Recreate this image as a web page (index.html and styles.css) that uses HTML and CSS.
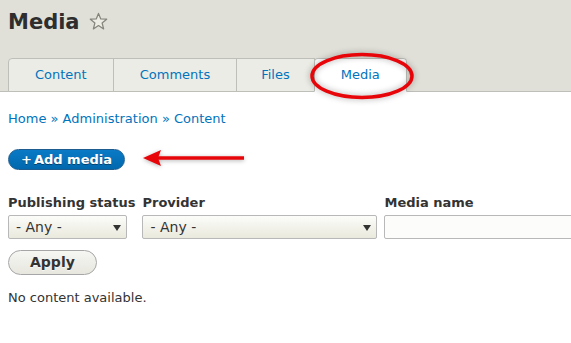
FILE: index.html
```html
<!DOCTYPE html>
<html lang="en">
<head>
  <meta charset="UTF-8" />
  <title>Media</title>
  <link rel="stylesheet" href="styles.css">
</head>
<body>
  <div class="page-header">
    <h1 class="page-title">Media
      <svg class="star" width="19" height="19" viewBox="0 0 20 20">
        <polygon points="10,1.5 12.4,7.3 18.6,7.6 13.8,11.6 15.4,17.8 10,14.3 4.6,17.8 6.2,11.6 1.4,7.6 7.6,7.3" fill="#ecebe4" stroke="#85857c" stroke-width="1.3" stroke-linejoin="round" />
      </svg>
    </h1>
    <ul class="tabs">
      <li><a href="#">Content</a></li>
      <li><a href="#">Comments</a></li>
      <li class="tab-files"><a href="#">Files</a></li>
      <li class="is-active">
        <a href="#">Media</a>
        <!-- circled in the screenshot -->
        <svg class="mark-circle" width="110" height="54" viewBox="0 0 110 54">
          <ellipse cx="55" cy="27" rx="50" ry="21.5" fill="none" stroke="#e8050a" stroke-width="3.5" />
        </svg>
      </li>
    </ul>
  </div>

  <div class="content">
    <div class="breadcrumb">
      <a href="#">Home</a> » <a href="#">Administration</a> » <a href="#">Content</a>
    </div>

    <div class="action-links">
      <a href="#" class="button-primary">+<span class="plus-gap"></span>Add media</a>
      <svg class="mark-arrow" width="106" height="22" viewBox="0 0 106 22">
        <line x1="14" y1="11" x2="103" y2="11" stroke="#e8050a" stroke-width="3.5" />
        <polygon points="2,11 20,3 17,11 20,19" fill="#e8050a" />
      </svg>
    </div>

    <form class="filters">
      <div class="form-item">
        <label>Publishing status</label>
        <span class="select-wrap select-status">
          <select><option>- Any -</option></select>
        </span>
      </div>
      <div class="form-item">
        <label>Provider</label>
        <span class="select-wrap select-provider">
          <select><option>- Any -</option></select>
        </span>
      </div>
      <div class="form-item">
        <label>Media name</label>
        <input type="text" class="text-input" />
      </div>
    </form>

    <button class="button">Apply</button>

    <p class="empty">No content available.</p>
  </div>
</body>
</html>
```

FILE: styles.css
```css
body {
  margin: 0;
  font-family: "DejaVu Sans", sans-serif;
  font-size: 13px;
  color: #333;
  background: #fff;
  overflow: hidden;
}

a {
  color: #0074bd;
  text-decoration: none;
}

.page-header {
  background: #e0e0d8;
  padding: 0 8px;
  border-bottom: 1px solid #bfbfba;
}

.page-title {
  margin: 0;
  padding-top: 8px;
  height: 58px;
  line-height: 28px;
  font-size: 21px;
  font-weight: bold;
  color: #2e2e2e;
  display: flex;
  align-items: flex-start;
  box-sizing: border-box;
}

.star {
  margin: 4px 0 0 9px;
}

.tabs {
  list-style: none;
  margin: 0 0 -1px;
  padding: 0;
  display: flex;
}

.tabs li {
  position: relative;
  background: #ecece6;
  border: 1px solid #bfbfba;
  margin-left: -1px;
}

.tabs li:first-child {
  margin-left: 0;
  border-top-left-radius: 4px;
}

.tabs a {
  display: block;
  padding: 8px 26px;
  line-height: 16px;
}

.tabs .tab-files a {
  padding: 8px 24px;
}

.tabs li.is-active {
  background: #fff;
  border-bottom-color: #fff;
  border-radius: 4px 4px 0 0;
}

.mark-circle {
  position: absolute;
  left: -8px;
  top: -10px;
  filter: drop-shadow(0 0 3px rgba(0, 0, 0, 0.35));
}

.content {
  padding: 18px 8px 0;
  overflow: hidden;
}

.breadcrumb {
  line-height: 18px;
  color: #0074bd;
}

.action-links {
  position: relative;
  margin-top: 21px;
  height: 21px;
}

.button-primary {
  display: inline-block;
  box-sizing: border-box;
  height: 21px;
  padding: 2px 12px 2px 12px;
  line-height: 15px;
  font-weight: bold;
  color: #fff;
  background: linear-gradient(#0a7ac6, #0068ad);
  border: 1px solid #1e5c90;
  border-radius: 20em;
  text-shadow: 0 1px 0 rgba(0, 0, 0, 0.4);
}

.plus-gap {
  display: inline-block;
  width: 2px;
}

.mark-arrow {
  position: absolute;
  left: 133px;
  top: -2px;
  filter: drop-shadow(0 1px 2px rgba(0, 0, 0, 0.3));
}

.filters {
  display: flex;
  gap: 7px;
  margin-top: 24px;
  white-space: nowrap;
}

.form-item label {
  display: block;
  font-weight: bold;
  line-height: 18px;
  margin-bottom: 3px;
}

.select-wrap {
  position: relative;
  display: block;
  width: fit-content;
}

.select-wrap select {
  -webkit-appearance: none;
  appearance: none;
  display: block;
  box-sizing: border-box;
  height: 24px;
  padding: 0 24px 0 7px;
  font-family: "DejaVu Sans", sans-serif;
  font-size: 14px;
  color: #333;
  background: linear-gradient(#fcfcfa, #e9e9dd);
  border: 1px solid #b8b8b8;
  border-radius: 2px;
}

.select-wrap::after {
  content: "";
  position: absolute;
  right: 6px;
  top: 10px;
  border-left: 4px solid transparent;
  border-right: 4px solid transparent;
  border-top: 6px solid #333;
  pointer-events: none;
}

.select-status select {
  width: 119px;
}

.select-provider select {
  width: 235px;
}

.text-input {
  display: block;
  box-sizing: border-box;
  width: 240px;
  height: 24px;
  font-family: "DejaVu Sans", sans-serif;
  font-size: 14px;
  background: #fcfcfa;
  border: 1px solid #b8b8b8;
  border-radius: 2px;
}

.button {
  display: block;
  margin-top: 11px;
  box-sizing: border-box;
  height: 25px;
  padding: 4px 21px;
  line-height: 15px;
  font-family: "DejaVu Sans", sans-serif;
  font-size: 14px;
  font-weight: bold;
  color: #333;
  background: linear-gradient(#f6f6f3, #e7e7df);
  border: 1px solid #a6a6a6;
  border-radius: 20em;
  text-shadow: 0 1px hsla(0, 0%, 100%, 0.6);
}

.empty {
  margin: 14px 0 0;
  line-height: 18px;
}
```
